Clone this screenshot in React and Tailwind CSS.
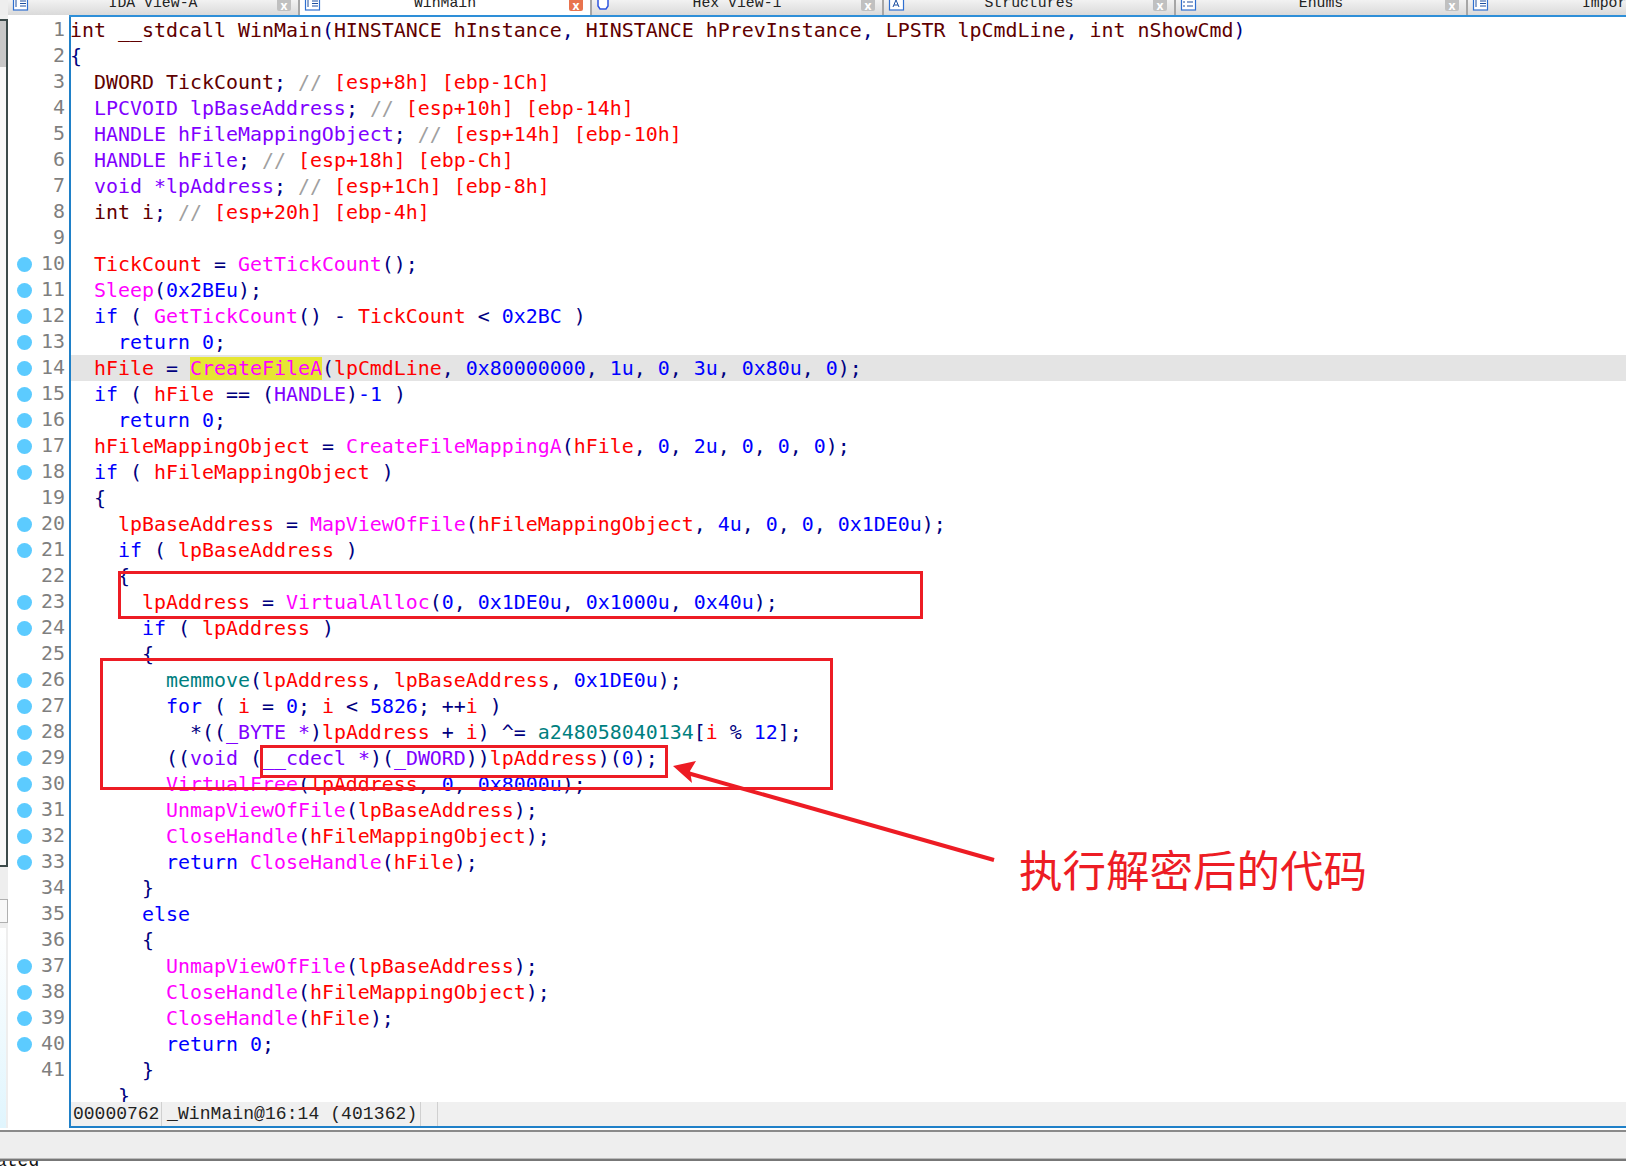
import React from 'react';

const C = {
  k: 'text-[#0000ff]',
  r: 'text-[#ff0000]',
  f: 'text-[#ff00ff]',
  p: 'text-[#000080]',
  t: 'text-[#8000ff]',
  m: 'text-[#600000]',
  c: 'text-[#a0a0a0]',
  g: 'text-[#007f7f]',
  h: 'text-[#ff00ff] bg-[#e6e632]',
};

// one entry per pseudocode line: [has breakpoint dot, tokens]
const lines = [
  [0, [['m', 'int __stdcall WinMain'], ['p', '('], ['m', 'HINSTANCE hInstance'], ['p', ', '], ['m', 'HINSTANCE hPrevInstance'], ['p', ', '], ['m', 'LPSTR lpCmdLine'], ['p', ', '], ['m', 'int nShowCmd'], ['p', ')']]],
  [0, [['p', '{']]],
  [0, [['m', '  DWORD TickCount'], ['p', '; '], ['c', '// '], ['r', '[esp+8h] [ebp-1Ch]']]],
  [0, [['t', '  LPCVOID lpBaseAddress'], ['p', '; '], ['c', '// '], ['r', '[esp+10h] [ebp-14h]']]],
  [0, [['t', '  HANDLE hFileMappingObject'], ['p', '; '], ['c', '// '], ['r', '[esp+14h] [ebp-10h]']]],
  [0, [['t', '  HANDLE hFile'], ['p', '; '], ['c', '// '], ['r', '[esp+18h] [ebp-Ch]']]],
  [0, [['t', '  void *lpAddress'], ['p', '; '], ['c', '// '], ['r', '[esp+1Ch] [ebp-8h]']]],
  [0, [['m', '  int i'], ['p', '; '], ['c', '// '], ['r', '[esp+20h] [ebp-4h]']]],
  [0, []],
  [1, [['r', '  TickCount'], ['p', ' = '], ['f', 'GetTickCount'], ['p', '();']]],
  [1, [['f', '  Sleep'], ['p', '('], ['k', '0x2BEu'], ['p', ');']]],
  [1, [['k', '  if'], ['p', ' ( '], ['f', 'GetTickCount'], ['p', '() - '], ['r', 'TickCount'], ['p', ' < '], ['k', '0x2BC'], ['p', ' )']]],
  [1, [['k', '    return 0'], ['p', ';']]],
  [1, [['r', '  hFile'], ['p', ' = '], ['h', 'CreateFileA'], ['p', '('], ['r', 'lpCmdLine'], ['p', ', '], ['k', '0x80000000'], ['p', ', '], ['k', '1u'], ['p', ', '], ['k', '0'], ['p', ', '], ['k', '3u'], ['p', ', '], ['k', '0x80u'], ['p', ', '], ['k', '0'], ['p', ');']]],
  [1, [['k', '  if'], ['p', ' ( '], ['r', 'hFile'], ['p', ' == ('], ['t', 'HANDLE'], ['p', ')'], ['k', '-1'], ['p', ' )']]],
  [1, [['k', '    return 0'], ['p', ';']]],
  [1, [['r', '  hFileMappingObject'], ['p', ' = '], ['f', 'CreateFileMappingA'], ['p', '('], ['r', 'hFile'], ['p', ', '], ['k', '0'], ['p', ', '], ['k', '2u'], ['p', ', '], ['k', '0'], ['p', ', '], ['k', '0'], ['p', ', '], ['k', '0'], ['p', ');']]],
  [1, [['k', '  if'], ['p', ' ( '], ['r', 'hFileMappingObject'], ['p', ' )']]],
  [0, [['p', '  {']]],
  [1, [['r', '    lpBaseAddress'], ['p', ' = '], ['f', 'MapViewOfFile'], ['p', '('], ['r', 'hFileMappingObject'], ['p', ', '], ['k', '4u'], ['p', ', '], ['k', '0'], ['p', ', '], ['k', '0'], ['p', ', '], ['k', '0x1DE0u'], ['p', ');']]],
  [1, [['k', '    if'], ['p', ' ( '], ['r', 'lpBaseAddress'], ['p', ' )']]],
  [0, [['p', '    {']]],
  [1, [['r', '      lpAddress'], ['p', ' = '], ['f', 'VirtualAlloc'], ['p', '('], ['k', '0'], ['p', ', '], ['k', '0x1DE0u'], ['p', ', '], ['k', '0x1000u'], ['p', ', '], ['k', '0x40u'], ['p', ');']]],
  [1, [['k', '      if'], ['p', ' ( '], ['r', 'lpAddress'], ['p', ' )']]],
  [0, [['p', '      {']]],
  [1, [['g', '        memmove'], ['p', '('], ['r', 'lpAddress'], ['p', ', '], ['r', 'lpBaseAddress'], ['p', ', '], ['k', '0x1DE0u'], ['p', ');']]],
  [1, [['k', '        for'], ['p', ' ( '], ['r', 'i'], ['p', ' = '], ['k', '0'], ['p', '; '], ['r', 'i'], ['p', ' < '], ['k', '5826'], ['p', '; ++'], ['r', 'i'], ['p', ' )']]],
  [1, [['p', '          *(('], ['t', '_BYTE *'], ['p', ')'], ['r', 'lpAddress'], ['p', ' + '], ['r', 'i'], ['p', ') ^= '], ['g', 'a248058040134'], ['p', '['], ['r', 'i'], ['p', ' % '], ['k', '12'], ['p', '];']]],
  [1, [['p', '        (('], ['t', 'void'], ['p', ' ('], ['t', '__cdecl *'], ['p', ')('], ['t', '_DWORD'], ['p', '))'], ['r', 'lpAddress'], ['p', ')('], ['k', '0'], ['p', ');']]],
  [1, [['f', '        VirtualFree'], ['p', '('], ['r', 'lpAddress'], ['p', ', '], ['k', '0'], ['p', ', '], ['k', '0x8000u'], ['p', ');']]],
  [1, [['f', '        UnmapViewOfFile'], ['p', '('], ['r', 'lpBaseAddress'], ['p', ');']]],
  [1, [['f', '        CloseHandle'], ['p', '('], ['r', 'hFileMappingObject'], ['p', ');']]],
  [1, [['k', '        return '], ['f', 'CloseHandle'], ['p', '('], ['r', 'hFile'], ['p', ');']]],
  [0, [['p', '      }']]],
  [0, [['k', '      else']]],
  [0, [['p', '      {']]],
  [1, [['f', '        UnmapViewOfFile'], ['p', '('], ['r', 'lpBaseAddress'], ['p', ');']]],
  [1, [['f', '        CloseHandle'], ['p', '('], ['r', 'hFileMappingObject'], ['p', ');']]],
  [1, [['f', '        CloseHandle'], ['p', '('], ['r', 'hFile'], ['p', ');']]],
  [1, [['k', '        return 0'], ['p', ';']]],
  [0, [['p', '      }']]],
  [0, [['p', '    }']]],
];

const tabs = [
  { name: 'IDA View-A', icon: 'page' },
  { name: 'WinMain', icon: 'page', active: true },
  { name: 'Hex View-1', icon: 'hex' },
  { name: 'Structures', icon: 'struct' },
  { name: 'Enums', icon: 'enum' },
  { name: 'Imports', icon: 'imports' },
];

function TabIcon({ kind }) {
  return (
    <svg width="17" height="15" viewBox="0 0 17 15" className="shrink-0">
      {kind === 'hex' ? (
        <path d="M2 -2h10v8l-2 3h-6l-2-3z" fill="#fff" stroke="#2f55e0" strokeWidth="1.5" />
      ) : (
        <rect x="1.5" y="-3" width="14" height="13" fill="#fff" stroke="#2f6fd0" strokeWidth="1.2" />
      )}
      {kind === 'page' || kind === 'imports' ? (
        <path d="M8 1h6M8 3.5h6M8 6h6M4 0v7" stroke="#1d4fa0" strokeWidth="1" fill="none" />
      ) : null}
      {kind === 'struct' ? <path d="M5 7l3-7 3 7M6 5h4" stroke="#1d4fa0" strokeWidth="1" fill="none" /> : null}
      {kind === 'enum' ? <path d="M3 2h2M3 6h2M7 2h6M7 6h6" stroke="#1d4fa0" strokeWidth="1.2" fill="none" /> : null}
    </svg>
  );
}

function Tab({ name, icon, active }) {
  return (
    <div
      className={`flex w-[292px] h-[15px] shrink-0 items-start pl-1 pr-[7px] border-r-2 border-[#a6a6a6] overflow-hidden ${
        active ? 'bg-white' : 'bg-gradient-to-b from-[#f2f2f2] to-[#dadada]'
      }`}
    >
      <TabIcon kind={icon} />
      <span className="flex-1 text-center text-[14.8px] leading-[15px] -mt-[4px] text-[#222] font-['Liberation_Mono',monospace]">
        {name}
      </span>
      <span
        className={`flex items-center justify-center w-[14px] h-[11px] rounded-b-[2px] text-[12px] leading-[9px] font-bold text-white ${
          active ? 'bg-[#e8734e]' : 'bg-[#c0c0c0]'
        }`}
      >
        x
      </span>
    </div>
  );
}

function CodeRow({ num, dot, tokens }) {
  const current = num === 14;
  return (
    <div className="flex h-[26px] shrink-0 leading-[28px]">
      <div className="flex w-[61px] items-center pl-[9px] text-[#7f7f7f]">
        {dot ? <span className="w-[15px] h-[15px] rounded-full bg-[#5ccbff] shrink-0" /> : null}
        <span className="ml-auto pr-1">{num}</span>
      </div>
      <div className={`flex-1 border-l-2 border-[#1f80c8] -indent-px whitespace-pre ${current ? 'bg-[#e4e4e4]' : 'bg-white'}`}>
        {tokens.map(([kind, text], i) => (
          <span key={i} className={C[kind]}>
            {text}
          </span>
        ))}
      </div>
    </div>
  );
}

function SideStrip() {
  return (
    <div className="flex flex-col w-2 shrink-0 h-full">
      <div className="h-[4px] bg-[#f0f0f0]" />
      <div className="h-[48px] bg-[#c8c8c8] border-t-2 border-r-2 border-[#3c4a4a]" />
      <div className="h-[800px] bg-[#f8f8f8] border-r-2 border-b-2 border-[#3c4a4a]" />
      <div className="h-[32px] bg-[#eeeeee]" />
      <div className="h-[24px] bg-[#f8f8f8] border border-l-0 border-[#b0b0b0]" />
      <div className="h-[5px] bg-[#eeeeee]" />
      <div className="flex-1 bg-gradient-to-b from-white to-[#e0f5fd] border-r-2 border-[#eeeeee]" />
    </div>
  );
}

export default function App() {
  return (
    <div className="relative w-[1626px] h-[1171px] overflow-hidden bg-white flex flex-col">
      {/* tab strip, cut off at the top of the shot */}
      <div className="flex h-[15px] shrink-0 pl-2 bg-[#eeeeee]">
        {tabs.map((t) => (
          <Tab key={t.name} {...t} />
        ))}
      </div>

      {/* pseudocode view */}
      <div className="flex h-[1113px] shrink-0">
        <SideStrip />
        <div className="flex-1 min-w-0 flex flex-col relative overflow-hidden text-[19.93px] leading-[26px] font-['DejaVu_Sans_Mono',monospace]">
          <div className="h-[2px] shrink-0 ml-[61px] bg-[#2e8fd8]" />
          <div className="flex-1 min-h-0 overflow-hidden flex flex-col">
            {lines.map(([dot, tokens], i) => (
              <CodeRow key={i} num={i < 41 ? i + 1 : ''} dot={dot} tokens={tokens} />
            ))}
          </div>
          <div className="flex h-[26px] shrink-0 ml-[61px] items-center bg-[#f0f0f0] border-l-2 border-b-2 border-[#1f80c8] text-[18px] leading-[24px] text-[#222] font-['Liberation_Mono',monospace]">
            <span className="pl-[2px] w-[91px] border-r border-[#d0d0d0]">00000762</span>
            <span className="pl-[5px] w-[259px] tracking-[0.08px] border-r border-[#d0d0d0]">_WinMain@16:14 (401362)</span>
            <span className="w-[17px] h-full border-r border-[#d0d0d0]" />
          </div>
        </div>
      </div>

      {/* bottom band and clipped output window */}
      <div className="h-[29px] shrink-0 mt-[2px] bg-[#eeeeee] border-t-2 border-[#8a8a8a] border-b border-b-[#bbbbbb]" />
      <div className="flex-1 border-t-2 border-[#777777] overflow-hidden bg-white">
        <div className="-mt-[10px] -ml-1 text-[18px] leading-[20px] text-[#111] font-['Liberation_Mono',monospace]">
          <span className="whitespace-pre">ated</span>
        </div>
      </div>

      {/* red annotations drawn over the screenshot */}
      <div className="absolute left-[118px] top-[571px] w-[805px] h-[48px] border-[3px] border-[#ed1c24]" />
      <div className="absolute left-[100px] top-[658px] w-[733px] h-[132px] border-[3px] border-[#ed1c24]" />
      <div className="absolute left-[260px] top-[745px] w-[408px] h-[33px] border-[3px] border-[#ed1c24]" />
      <svg className="absolute left-[660px] top-[750px]" width="350" height="120" viewBox="0 0 350 120">
        <path d="M334 110 L24 22" stroke="#ed1c24" strokeWidth="4" fill="none" />
        <path d="M13 16 L36 11 L30 21 L32 33 Z" fill="#ed1c24" />
      </svg>
      <div className="absolute left-[1019px] top-[839px] text-[43.5px] leading-[60px] text-[#ed1c24] whitespace-nowrap font-['Noto_Sans_CJK_SC',sans-serif]">
        执行解密后的代码
      </div>
    </div>
  );
}
